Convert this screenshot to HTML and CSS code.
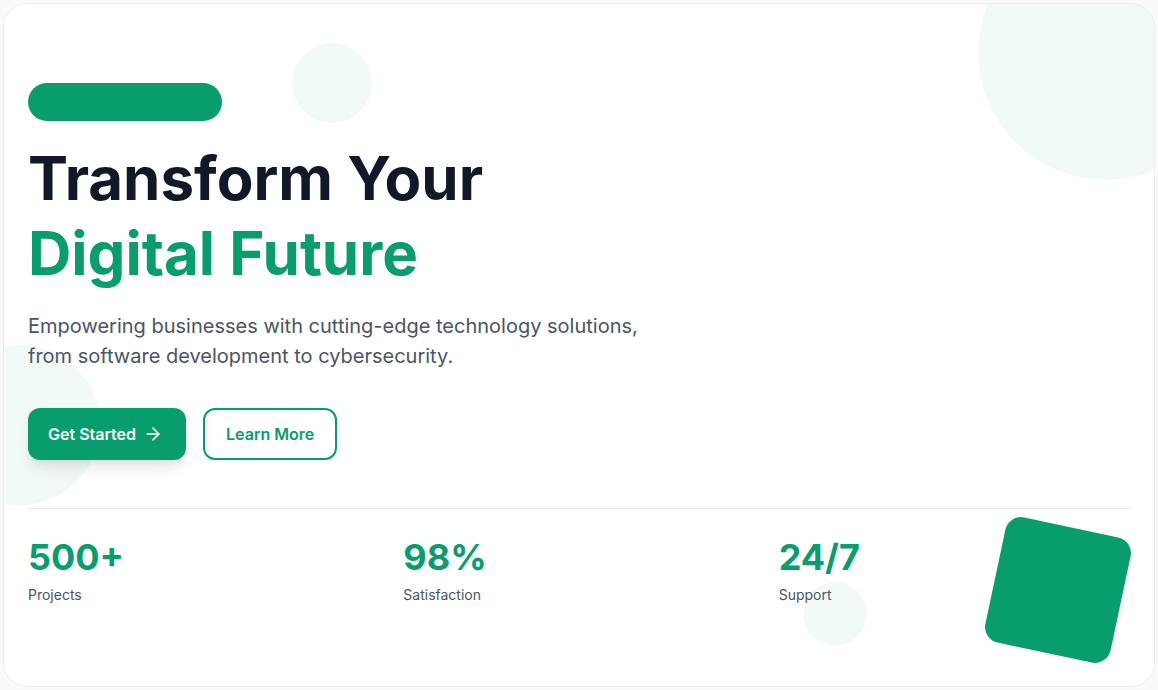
FILE: index.html
```html
<!DOCTYPE html>
<html lang="en">
<head>
<meta charset="utf-8">
<title>Transform Your Digital Future</title>
<link rel="stylesheet" href="styles.css">
</head>
<body>
<section class="hero-card">
  <div class="blob blob-top-right"></div>
  <div class="blob blob-top"></div>
  <div class="blob blob-left"></div>
  <div class="blob blob-bottom"></div>
  <div class="tilted-square"></div>

  <div class="hero-content">
    <span class="badge" aria-hidden="true"></span>
    <h1 class="title">
      <span class="title-line">Transform Your</span>
      <span class="title-line accent">Digital Future</span>
    </h1>
    <p class="lead">Empowering businesses with cutting-edge technology solutions, from software development to cybersecurity.</p>
    <div class="actions">
      <a class="btn btn-primary" href="#">Get Started
        <svg class="btn-icon" viewBox="0 0 24 24" fill="none" stroke="currentColor" stroke-width="2" stroke-linecap="round" stroke-linejoin="round"><path d="M5 12h14"/><path d="m12 5 7 7-7 7"/></svg>
      </a>
      <a class="btn btn-outline" href="#">Learn More</a>
    </div>
    <div class="stats">
      <div class="stat">
        <div class="stat-value">500+</div>
        <div class="stat-label">Projects</div>
      </div>
      <div class="stat">
        <div class="stat-value">98%</div>
        <div class="stat-label">Satisfaction</div>
      </div>
      <div class="stat">
        <div class="stat-value">24/7</div>
        <div class="stat-label">Support</div>
      </div>
    </div>
  </div>
</section>
</body>
</html>
```

FILE: styles.css
```css
* { box-sizing: border-box; }

html, body {
  margin: 0;
  padding: 0;
}

body {
  background: #f9fafb;
  padding: 3px;
  font-family: Inter, "Noto Sans", "Liberation Sans", sans-serif;
}

.hero-card {
  position: relative;
  overflow: hidden;
  background: #ffffff;
  border: 1px solid #eceef0;
  border-radius: 24px;
  height: 684px;
  padding: 79px 24px 0;
}

.blob {
  position: absolute;
  border-radius: 50%;
  background: rgba(5, 150, 105, 0.05);
  z-index: 0;
}

.blob-top-right {
  width: 256px;
  height: 256px;
  top: -80px;
  right: -80px;
}

.blob-top {
  width: 80px;
  height: 80px;
  top: 39px;
  left: 25%;
}

.blob-left {
  width: 160px;
  height: 160px;
  top: 50%;
  left: -64px;
}

.blob-bottom {
  width: 64px;
  height: 64px;
  right: 25%;
  bottom: 40px;
}

.tilted-square {
  position: absolute;
  width: 128px;
  height: 128px;
  right: 32px;
  bottom: 32px;
  background: #079d6c;
  border-radius: 16px;
  transform: rotate(12deg);
  z-index: 0;
}

.hero-content {
  position: relative;
  z-index: 1;
}

.badge {
  display: block;
  width: 194px;
  height: 38px;
  border-radius: 19px;
  background: #079d6c;
}

.title {
  margin: 20px 0 0;
  font-size: 60px;
  line-height: 75px;
  font-weight: 700;
  color: #111827;
  letter-spacing: 0;
}

.title-line {
  display: block;
}

.accent {
  color: #079d6c;
}

.lead {
  margin: 20px 0 0;
  max-width: 640px;
  font-size: 20px;
  line-height: 30px;
  color: #4b5563;
}

.actions {
  display: flex;
  gap: 17px;
  margin-top: 37px;
}

.btn {
  display: inline-flex;
  align-items: center;
  justify-content: center;
  height: 52px;
  border-radius: 12px;
  font-size: 16px;
  font-weight: 600;
  text-decoration: none;
}

.btn-primary {
  padding: 0 23px 0 20px;
  gap: 7px;
  background: #079d6c;
  color: #ffffff;
  box-shadow: 0 10px 15px -3px rgba(0, 0, 0, 0.1), 0 4px 6px -4px rgba(0, 0, 0, 0.1);
}

.btn-icon {
  width: 20px;
  height: 20px;
}

.btn-outline {
  padding: 0 21px;
  border: 2px solid #079d6c;
  color: #079d6c;
  background: #ffffff;
}

.stats {
  display: grid;
  grid-template-columns: repeat(3, 1fr);
  gap: 24px;
  margin-top: 48px;
  padding-top: 30px;
  border-top: 1px solid #e5e7eb;
}

.stat-value {
  font-size: 36px;
  line-height: 36px;
  font-weight: 700;
  color: #079d6c;
}

.stat-label {
  margin-top: 10px;
  font-size: 14px;
  line-height: 20px;
  color: #4b5563;
}
```
